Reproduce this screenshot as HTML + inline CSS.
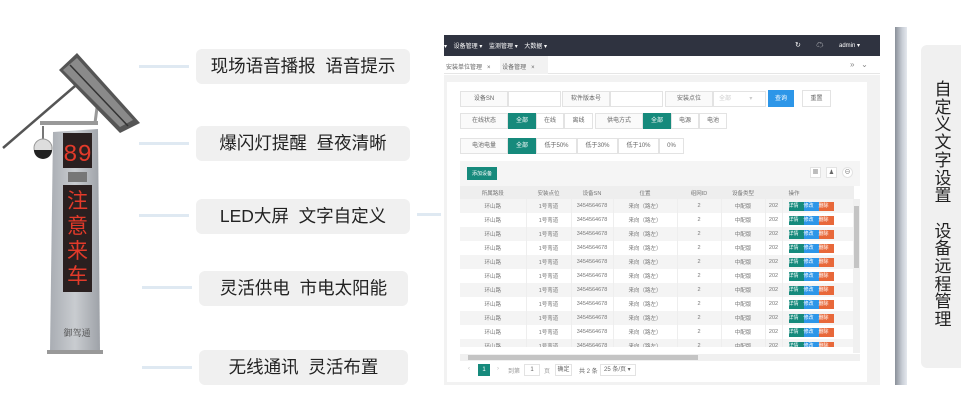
<!DOCTYPE html>
<html><head><meta charset="utf-8"><style>
*{margin:0;padding:0;box-sizing:border-box}
body{width:961px;height:400px;background:#fff;position:relative;overflow:hidden;font-family:"Liberation Sans","Noto Sans CJK SC",sans-serif}
.lbl{position:absolute;left:196px;width:214px;height:35px;background:#f0f0f0;border-radius:6px;font-size:17.5px;color:#222;text-align:center;line-height:35px;white-space:nowrap}
.arr{position:absolute;left:139px;width:50px;height:3px;background:#dfe9f2}
.a{position:absolute}
.sm{font-size:6px;color:#666;white-space:nowrap}
table{border-collapse:collapse;position:absolute;left:460px;top:186px;width:393px;font-size:5.5px;color:#777;table-layout:fixed}
td{height:14px;text-align:center;white-space:nowrap;overflow:hidden;border-right:1px solid #eee}
tr:nth-child(even) td{background:#f4f4f4}
tr.h td{background:#eee;height:13px}
.b{display:inline-block;width:15px;height:9px;line-height:9px;color:#fff;font-size:5px;vertical-align:middle}
.box{position:absolute;border:1px solid #e3e3e3;background:#fff;font-size:6px;color:#666;text-align:center}
.g{background:#168a7c;color:#fff;border-color:#168a7c}
</style></head><body>

<div class="arr" style="top:65px"></div>
<div class="arr" style="top:142px"></div>
<div class="arr" style="top:214px"></div>
<div class="arr" style="top:286px;left:142px"></div>
<div class="arr" style="top:366px;left:142px"></div>
<div class="a" style="left:417px;top:213px;width:24px;height:3px;background:#dfe9f2"></div>

<div class="lbl" style="top:49px">现场语音播报&nbsp; 语音提示</div>
<div class="lbl" style="top:126px">爆闪灯提醒&nbsp; 昼夜清晰</div>
<div class="lbl" style="top:199px">LED大屏&nbsp; 文字自定义</div>
<div class="lbl" style="top:271px;left:199px;width:209px">灵活供电&nbsp; 市电太阳能</div>
<div class="lbl" style="top:350px;left:199px;width:209px">无线通讯&nbsp; 灵活布置</div>

<svg class="a" style="left:0;top:40px" width="150" height="320">
<defs><linearGradient id="pg" x1="0" x2="1"><stop offset="0" stop-color="#a9adb3"/><stop offset=".5" stop-color="#c9ccd0"/><stop offset="1" stop-color="#9ea2a8"/></linearGradient></defs>
<line x1="3" y1="108" x2="82" y2="40" stroke="#555" stroke-width="2.5"/>
<line x1="40" y1="83" x2="98" y2="83" stroke="#999" stroke-width="4"/>
<line x1="95" y1="83" x2="98" y2="60" stroke="#999" stroke-width="3"/>
<polygon points="59,30 77,13 140,83 120,93" fill="#555"/>
<polygon points="63,30 77,18 133,80 120,87" fill="#8a8a8a"/>
<line x1="70" y1="25" x2="128" y2="86" stroke="#333" stroke-width="1.5"/>
<line x1="43" y1="86" x2="43" y2="100" stroke="#777" stroke-width="2"/>
<circle cx="43" cy="108" r="9" fill="#ddd" stroke="#999"/>
<path d="M34 110 A9 9 0 0 0 52 110Z" fill="#222"/>
<polygon points="53,92 98,89 100,312 50,312" fill="url(#pg)"/>
<rect x="47" y="310" width="56" height="4" fill="#999"/>
<rect x="63" y="93" width="29" height="35" fill="#2a2020"/>
<text x="77.5" y="121" font-size="24" fill="#e23a2a" text-anchor="middle" font-family="Liberation Mono,monospace">89</text>
<rect x="68" y="132" width="19" height="10" fill="#777"/>
<rect x="63" y="145" width="29" height="107" fill="#2a2020"/>
<text font-size="21" fill="#e23a2a" text-anchor="middle" font-family="Noto Sans CJK SC,sans-serif"><tspan x="77.5" y="168">注</tspan><tspan x="77.5" y="193">意</tspan><tspan x="77.5" y="218">来</tspan><tspan x="77.5" y="243">车</tspan></text>
<text x="77" y="296" font-size="9" fill="#444" text-anchor="middle" font-family="Noto Serif CJK SC,serif">御驾通</text>
</svg>

<!-- app -->
<div class="a" style="left:444px;top:35px;width:436px;height:21px;background:#2f3340"></div>
<div class="a sm" style="left:444px;top:41px;color:#fff;font-size:6px">▾&nbsp;&nbsp;&nbsp; 设备管理 ▾&nbsp;&nbsp;&nbsp; 监测管理 ▾&nbsp;&nbsp;&nbsp; 大数据 ▾</div>
<div class="a sm" style="left:795px;top:40px;color:#fff;font-size:7px">↻&nbsp;&nbsp;&nbsp;&nbsp;&nbsp;&nbsp;&nbsp; ☁&nbsp;&nbsp;&nbsp;&nbsp;&nbsp;&nbsp;&nbsp; <span style="font-size:6px">admin ▾</span></div>
<div class="a" style="left:444px;top:56px;width:436px;height:18px;background:#fff;border-bottom:1px solid #e6e6e6"></div>
<div class="a" style="left:500px;top:56px;width:48px;height:18px;background:#f2f2f2"></div>
<div class="a sm" style="left:446px;top:62px">安装单位管理 &nbsp;&nbsp;×&nbsp;&nbsp;&nbsp;&nbsp;&nbsp;&nbsp; 设备管理&nbsp;&nbsp; ×</div>
<div class="a sm" style="left:850px;top:60px;font-size:8px;color:#888">»&nbsp;&nbsp; ⌄</div>
<div class="a" style="left:444px;top:75px;width:436px;height:310px;background:#f2f2f2"></div>
<div class="a" style="left:447px;top:82px;width:420px;height:300px;background:#fff"></div>

<div class="box" style="left:460px;top:91px;width:48px;height:16px;line-height:15px;background:#fafafa">设备SN</div>
<div class="box" style="left:508px;top:91px;width:53px;height:16px"></div>
<div class="box" style="left:562px;top:91px;width:48px;height:16px;line-height:15px;background:#fafafa">软件版本号</div>
<div class="box" style="left:610px;top:91px;width:53px;height:16px"></div>
<div class="box" style="left:665px;top:91px;width:48px;height:16px;line-height:15px;background:#fafafa">安装点位</div>
<div class="box" style="left:713px;top:91px;width:53px;height:16px;line-height:15px;color:#ccc;text-align:left;padding-left:5px">全部&nbsp;&nbsp;&nbsp;&nbsp;&nbsp;&nbsp;&nbsp;&nbsp;&nbsp;&nbsp; ▾</div>
<div class="box" style="left:768px;top:90px;width:26px;height:17px;line-height:16px;background:#2d96e8;color:#fff;border-color:#2d96e8">查询</div>
<div class="box" style="left:802px;top:90px;width:29px;height:17px;line-height:16px">重置</div>

<div class="box" style="left:460px;top:113px;width:48px;height:16px;line-height:15px;background:#fafafa">在线状态</div>
<div class="box g" style="left:508px;top:113px;width:28px;height:16px;line-height:15px">全部</div>
<div class="box" style="left:536px;top:113px;width:28px;height:16px;line-height:15px">在线</div>
<div class="box" style="left:564px;top:113px;width:29px;height:16px;line-height:15px">离线</div>
<div class="box" style="left:595px;top:113px;width:48px;height:16px;line-height:15px;background:#fafafa">供电方式</div>
<div class="box g" style="left:643px;top:113px;width:28px;height:16px;line-height:15px">全部</div>
<div class="box" style="left:671px;top:113px;width:28px;height:16px;line-height:15px">电源</div>
<div class="box" style="left:699px;top:113px;width:28px;height:16px;line-height:15px">电池</div>

<div class="box" style="left:460px;top:138px;width:48px;height:16px;line-height:15px;background:#fafafa">电池电量</div>
<div class="box g" style="left:508px;top:138px;width:28px;height:16px;line-height:15px">全部</div>
<div class="box" style="left:536px;top:138px;width:41px;height:16px;line-height:15px">低于50%</div>
<div class="box" style="left:577px;top:138px;width:41px;height:16px;line-height:15px">低于30%</div>
<div class="box" style="left:618px;top:138px;width:41px;height:16px;line-height:15px">低于10%</div>
<div class="box" style="left:659px;top:138px;width:25px;height:16px;line-height:15px">0%</div>

<div class="a" style="left:460px;top:161px;width:400px;height:25px;background:#f5f5f5"></div>
<div class="box g" style="left:467px;top:167px;width:30px;height:13px;line-height:12px;font-size:5px">添加设备</div>
<div class="box" style="left:810px;top:167px;width:11px;height:11px;line-height:10px">▦</div>
<div class="box" style="left:826px;top:167px;width:11px;height:11px;line-height:10px">♟</div>
<div class="box" style="left:842px;top:167px;width:11px;height:11px;line-height:10px;border-radius:50%">⊖</div>

<table>
<colgroup><col style="width:66px"><col style="width:45px"><col style="width:42px"><col style="width:64px"><col style="width:44px"><col style="width:44px"><col style="width:17px"><col style="width:71px"></colgroup>
<tr class="h"><td>所属路段</td><td>安装点位</td><td>设备SN</td><td>位置</td><td>组网ID</td><td>设备类型</td><td></td><td style="text-align:left;padding-left:6px">操作</td></tr>
<tr><td>环山路</td><td>1号弯道</td><td>3454564678</td><td>来向（路左）</td><td>2</td><td>中配版</td><td>202</td><td style="text-align:left;padding-left:6px"><span class="b" style="background:#168a7c">详情</span><span class="b" style="background:#2d96e8">修改</span><span class="b" style="background:#e8683a">删除</span></td></tr>
<tr><td>环山路</td><td>1号弯道</td><td>3454564678</td><td>来向（路左）</td><td>2</td><td>中配版</td><td>202</td><td style="text-align:left;padding-left:6px"><span class="b" style="background:#168a7c">详情</span><span class="b" style="background:#2d96e8">修改</span><span class="b" style="background:#e8683a">删除</span></td></tr>
<tr><td>环山路</td><td>1号弯道</td><td>3454564678</td><td>来向（路左）</td><td>2</td><td>中配版</td><td>202</td><td style="text-align:left;padding-left:6px"><span class="b" style="background:#168a7c">详情</span><span class="b" style="background:#2d96e8">修改</span><span class="b" style="background:#e8683a">删除</span></td></tr>
<tr><td>环山路</td><td>1号弯道</td><td>3454564678</td><td>来向（路左）</td><td>2</td><td>中配版</td><td>202</td><td style="text-align:left;padding-left:6px"><span class="b" style="background:#168a7c">详情</span><span class="b" style="background:#2d96e8">修改</span><span class="b" style="background:#e8683a">删除</span></td></tr>
<tr><td>环山路</td><td>1号弯道</td><td>3454564678</td><td>来向（路左）</td><td>2</td><td>中配版</td><td>202</td><td style="text-align:left;padding-left:6px"><span class="b" style="background:#168a7c">详情</span><span class="b" style="background:#2d96e8">修改</span><span class="b" style="background:#e8683a">删除</span></td></tr>
<tr><td>环山路</td><td>1号弯道</td><td>3454564678</td><td>来向（路左）</td><td>2</td><td>中配版</td><td>202</td><td style="text-align:left;padding-left:6px"><span class="b" style="background:#168a7c">详情</span><span class="b" style="background:#2d96e8">修改</span><span class="b" style="background:#e8683a">删除</span></td></tr>
<tr><td>环山路</td><td>1号弯道</td><td>3454564678</td><td>来向（路左）</td><td>2</td><td>中配版</td><td>202</td><td style="text-align:left;padding-left:6px"><span class="b" style="background:#168a7c">详情</span><span class="b" style="background:#2d96e8">修改</span><span class="b" style="background:#e8683a">删除</span></td></tr>
<tr><td>环山路</td><td>1号弯道</td><td>3454564678</td><td>来向（路左）</td><td>2</td><td>中配版</td><td>202</td><td style="text-align:left;padding-left:6px"><span class="b" style="background:#168a7c">详情</span><span class="b" style="background:#2d96e8">修改</span><span class="b" style="background:#e8683a">删除</span></td></tr>
<tr><td>环山路</td><td>1号弯道</td><td>3454564678</td><td>来向（路左）</td><td>2</td><td>中配版</td><td>202</td><td style="text-align:left;padding-left:6px"><span class="b" style="background:#168a7c">详情</span><span class="b" style="background:#2d96e8">修改</span><span class="b" style="background:#e8683a">删除</span></td></tr>
<tr><td>环山路</td><td>1号弯道</td><td>3454564678</td><td>来向（路左）</td><td>2</td><td>中配版</td><td>202</td><td style="text-align:left;padding-left:6px"><span class="b" style="background:#168a7c">详情</span><span class="b" style="background:#2d96e8">修改</span><span class="b" style="background:#e8683a">删除</span></td></tr>
<tr><td>环山路</td><td>1号弯道</td><td>3454564678</td><td>来向（路左）</td><td>2</td><td>中配版</td><td>202</td><td style="text-align:left;padding-left:6px"><span class="b" style="background:#168a7c">详情</span><span class="b" style="background:#2d96e8">修改</span><span class="b" style="background:#e8683a">删除</span></td></tr>
</table>
<div class="a" style="left:460px;top:347px;width:400px;height:6px;background:#fff;overflow:hidden"></div>
<div class="a" style="left:853px;top:199px;width:7px;height:154px;background:#f0f0f0"></div>
<div class="a" style="left:854px;top:206px;width:5px;height:62px;background:#c4c4c4"></div>
<div class="a" style="left:460px;top:354px;width:400px;height:7px;background:#f0f0f0"></div>
<div class="a" style="left:468px;top:355px;width:230px;height:5px;background:#c4c4c4"></div>

<div class="a sm" style="left:468px;top:366px;color:#bbb">‹</div>
<div class="box g" style="left:478px;top:364px;width:12px;height:12px;line-height:11px">1</div>
<div class="a sm" style="left:497px;top:366px;color:#bbb">›</div>
<div class="a sm" style="left:508px;top:366px;color:#999">到第</div>
<div class="box" style="left:524px;top:364px;width:16px;height:12px;line-height:11px">1</div>
<div class="a sm" style="left:544px;top:366px;color:#999">页</div>
<div class="box" style="left:555px;top:364px;width:17px;height:12px;line-height:11px">确定</div>
<div class="a sm" style="left:579px;top:366px">共 2 条</div>
<div class="box" style="left:600px;top:364px;width:36px;height:12px;line-height:11px;text-align:left;padding-left:3px">25 条/页 ▾</div>

<!-- divider bar -->
<div class="a" style="left:895px;top:27px;width:12px;height:358px;background:linear-gradient(90deg,#8a9099,#c9ced6 60%,#e4e8ee)"></div>

<div class="a" style="left:921px;top:45px;width:45px;height:323px;background:#f0f0f0;border-radius:6px"></div>
<div class="a" style="left:928px;top:79px;width:30px;font-size:17px;line-height:17.7px;color:#222;text-align:center;font-family:'Noto Sans CJK SC',sans-serif">自<br>定<br>义<br>文<br>字<br>设<br>置<br><br>设<br>备<br>远<br>程<br>管<br>理</div>
</body></html>
